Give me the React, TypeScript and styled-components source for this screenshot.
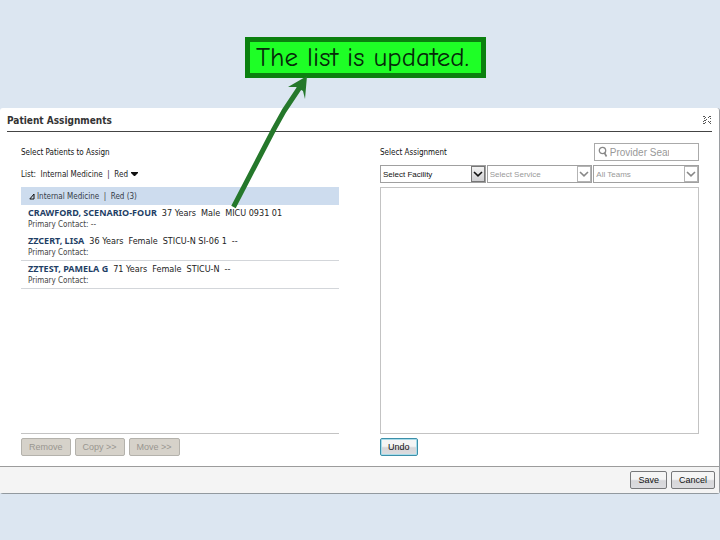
import React from "react";
import styled, { createGlobalStyle } from "styled-components";

const GlobalStyle = createGlobalStyle`
  * { box-sizing: border-box; }
  body {
    margin: 0;
    background: #dce6f1;
    font-family: Tahoma, "DejaVu Sans Condensed", "Noto Sans", sans-serif;
    font-size: 8px;
    line-height: 11px;
    color: #222;
  }
  button, input, select { font-family: "Liberation Sans", Arial, sans-serif; }
`;

const Page = styled.main`
  min-height: 100vh;
  padding-top: 37px;
`;

const CalloutRow = styled.div`
  display: flex;
  justify-content: center;
  padding-left: 11px;
  margin-bottom: 30px;
`;

const Callout = styled.div`
  position: relative;
  width: 241px;
  height: 41px;
  padding-left: 6px;
  border: 5px solid #0b800f;
  background: #1eff26;
  color: #06290a;
  font-family: "Comic Sans MS", "Comic Neue", "Open Sans", sans-serif;
  font-size: 27px;
  line-height: 31px;
  white-space: nowrap;
`;

const Arrow = styled.svg`
  position: absolute;
  left: -20px;
  top: 31px;
  width: 90px;
  height: 140px;
  z-index: 2;
`;

const Dialog = styled.section`
  background: #fff;
  border-right: 1px solid #9a9da1;
  border-bottom: 1px solid #92999f;
  border-radius: 3px;
`;

const TitleBar = styled.header`
  display: flex;
  align-items: center;
  justify-content: space-between;
  height: 24px;
  margin: 0 7px;
  border-bottom: 1px solid #444;
`;

const Title = styled.h1`
  margin: 0;
  padding-top: 3px;
  font-size: 10px;
  line-height: 14px;
  color: #333;
`;

const CloseButton = styled.button`
  display: flex;
  width: 10px;
  height: 10px;
  padding: 0;
  border: 0;
  background: none;
`;

const Columns = styled.div`
  display: grid;
  grid-template-columns: 318fr 319fr;
  column-gap: 41px;
  padding: 11px 20px 10px 21px;
`;

const Column = styled.section`
  display: flex;
  flex-direction: column;
  min-width: 0;
`;

const ColumnHead = styled.div`
  display: flex;
  justify-content: space-between;
  height: 18px;
`;

const Heading = styled.h2`
  margin: 0;
  padding-top: 4px;
  font-size: 8px;
  line-height: 11px;
  font-weight: normal;
  color: #111;
`;

const ListPicker = styled.button`
  display: flex;
  align-items: center;
  align-self: flex-start;
  gap: 3px;
  height: 18px;
  margin: 4px 0;
  padding: 0;
  border: 0;
  background: none;
  color: #222;
  font: inherit;
  white-space: pre;
`;

const ListArea = styled.div`
  height: 247px;
  border-bottom: 1px solid #c3c3c3;
`;

const GroupHeader = styled.div`
  display: flex;
  align-items: center;
  gap: 2px;
  height: 18px;
  padding-left: 8px;
  background: #cddcee;
  color: #353b47;
  white-space: pre;
`;

const Patients = styled.ul`
  margin: 0;
  padding: 0;
  list-style: none;
`;

const Patient = styled.li<{ $line: boolean }>`
  height: 28px;
  padding: 2px 0 0 7px;
  border-bottom: 1px solid ${(p) => (p.$line ? "#d3d6da" : "transparent")};
`;

const PatientLine = styled.div`
  display: flex;
  align-items: baseline;
  gap: 5px;
  font-size: 9px;
  white-space: nowrap;
`;

const PatientName = styled.strong`
  font-family: "Noto Sans", sans-serif;
  color: #1f3f66;
`;

const Contact = styled.div`
  color: #444;
`;

const SearchBox = styled.label`
  display: flex;
  align-items: center;
  gap: 2px;
  width: 33%;
  height: 18px;
  padding-left: 3px;
  border: 1px solid #aaa;
`;

const SearchInput = styled.input`
  width: 59px;
  padding: 0;
  border: 0;
  outline: 0;
  background: none;
  font-size: 10px;
  &::placeholder { color: #999; opacity: 1; }
`;

const Filters = styled.div`
  display: grid;
  grid-template-columns: 1fr 1fr 1fr;
  column-gap: 1px;
  margin: 4px 0;
`;

const Picker = styled.div`
  display: grid;
  grid-template-columns: 1fr 14px;
  height: 18px;
  border: 1px solid #a0a0a0;
`;

const PickerSelect = styled.select`
  grid-area: 1 / 1 / 2 / 3;
  min-width: 0;
  padding: 0 0 0 2px;
  border: 0;
  border-radius: 0;
  appearance: none;
  background: #fff;
  color: #111;
  font-size: 8px;
  opacity: 1;
  &:disabled { color: #999; }
`;

const PickerMark = styled.span<{ $off: boolean }>`
  grid-area: 1 / 2 / 2 / 3;
  display: flex;
  align-items: center;
  justify-content: center;
  border: 1px solid ${(p) => (p.$off ? "#b4b4b4" : "#777")};
  background: ${(p) => (p.$off ? "#fff" : "linear-gradient(#f2f2f2, #cfcfd2)")};
  color: ${(p) => (p.$off ? "#888" : "#111")};
  pointer-events: none;
`;

const Results = styled.div`
  height: 247px;
  border: 1px solid #c3c3c3;
`;

const Actions = styled.div`
  display: flex;
  gap: 4px;
  margin-top: 4px;
`;

const PushButton = styled.button<{ $focus?: boolean }>`
  height: 18px;
  padding: 0 7px;
  border: 1px solid ${(p) => (p.$focus ? "#3c8fa9" : "#77787a")};
  border-radius: 2px;
  background: linear-gradient(#f5f5f5 45%, #d6d6d9 55%, #dcdcdf);
  box-shadow: ${(p) => (p.$focus ? "inset 0 0 0 1px #a8dcea" : "none")};
  color: #111;
  font-size: 9px;
  line-height: 14px;
  &:disabled {
    border-color: #b4b2ac;
    background: #d6d2ca;
    color: #999690;
  }
`;

const Footer = styled.footer`
  display: flex;
  justify-content: flex-end;
  gap: 4px;
  padding: 4px 4px;
  border-top: 1px solid #9c9c9c;
  background: #f4f4f4;
`;

const Chevron = () => (
  <svg width="10" height="8" viewBox="0 0 10 8" aria-hidden="true">
    <path d="M1 2 5 5.8 9 2" fill="none" stroke="currentColor" strokeWidth="1.6" />
  </svg>
);

const patients = [
  { name: "CRAWFORD, SCENARIO-FOUR", facts: ["37 Years", "Male", "MICU 0931 01"], contact: "--" },
  { name: "ZZCERT, LISA", facts: ["36 Years", "Female", "STICU-N SI-06 1", "--"], contact: "" },
  { name: "ZZTEST, PAMELA G", facts: ["71 Years", "Female", "STICU-N", "--"], contact: "" },
];

const filters = [
  { label: "Select Facility", off: false },
  { label: "Select Service", off: true },
  { label: "All Teams", off: true },
];

export default function App() {
  return (
    <>
      <GlobalStyle />
      <Page>
        <CalloutRow>
          <Callout>
            The list is updated.
            <Arrow viewBox="0 0 90 140" aria-hidden="true">
              <path d="M3.5 134 44 56 54 38 70 14" fill="none" stroke="#25782b" strokeWidth="5" strokeLinejoin="round" />
              <path d="M77 3 58 14 66 14 73 18 75 26Z" fill="#25782b" />
            </Arrow>
          </Callout>
        </CalloutRow>
        <Dialog>
          <TitleBar>
            <Title>Patient Assignments</Title>
            <CloseButton aria-label="Close">
              <svg width="10" height="10" viewBox="0 0 10 10">
                <path
                  d="M1 1.5h2M3 2.5h1M2 3.5h1M4 4.5h1M2 5.5h2M1 6.5h1M3 7.5h1M1 8.5h2M7 1.5h2M6 2.5h1M8 3.5h1M6 6.5h1M7 7.5h1M8 8.5h1M8 6.5h1"
                  fill="none"
                  stroke="#555"
                />
              </svg>
            </CloseButton>
          </TitleBar>
          <Columns>
            <Column>
              <ColumnHead>
                <Heading>Select Patients to Assign</Heading>
              </ColumnHead>
              <ListPicker>
                {"List:  Internal Medicine  |  Red"}
                <svg width="7" height="5" viewBox="0 0 7 5" aria-hidden="true">
                  <path d="M0 0h7v1L4 4H3L0 1Z" fill="#111" />
                </svg>
              </ListPicker>
              <ListArea>
                <GroupHeader>
                  <svg width="6" height="7" viewBox="0 0 6 7" aria-hidden="true">
                    <path d="M5 1v5H.8Z" fill="none" stroke="#111" />
                  </svg>
                  {"Internal Medicine  |  Red (3)"}
                </GroupHeader>
                <Patients>
                  {patients.map((p, i) => (
                    <Patient key={p.name} $line={i > 0}>
                      <PatientLine>
                        <PatientName>{p.name}</PatientName>
                        {p.facts.map((f) => (
                          <span key={f}>{f}</span>
                        ))}
                      </PatientLine>
                      <Contact>Primary Contact: {p.contact}</Contact>
                    </Patient>
                  ))}
                </Patients>
              </ListArea>
              <Actions>
                <PushButton disabled>Remove</PushButton>
                <PushButton disabled>{"Copy >>"}</PushButton>
                <PushButton disabled>{"Move >>"}</PushButton>
              </Actions>
            </Column>
            <Column>
              <ColumnHead>
                <Heading>Select Assignment</Heading>
                <SearchBox>
                  <svg width="10" height="12" viewBox="0 0 10 12" aria-hidden="true">
                    <circle cx="4.5" cy="4.5" r="3.2" fill="none" stroke="#888" strokeWidth="1.3" />
                    <path d="M6.5 7 8.5 10.5" stroke="#888" strokeWidth="1.6" />
                  </svg>
                  <SearchInput placeholder="Provider Search" aria-label="Provider Search" />
                </SearchBox>
              </ColumnHead>
              <Filters>
                {filters.map((f) => (
                  <Picker key={f.label}>
                    <PickerSelect aria-label={f.label} disabled={f.off}>
                      <option>{f.label}</option>
                    </PickerSelect>
                    <PickerMark $off={f.off}>
                      <Chevron />
                    </PickerMark>
                  </Picker>
                ))}
              </Filters>
              <Results />
              <Actions>
                <PushButton $focus>Undo</PushButton>
              </Actions>
            </Column>
          </Columns>
          <Footer>
            <PushButton>Save</PushButton>
            <PushButton>Cancel</PushButton>
          </Footer>
        </Dialog>
      </Page>
    </>
  );
}
